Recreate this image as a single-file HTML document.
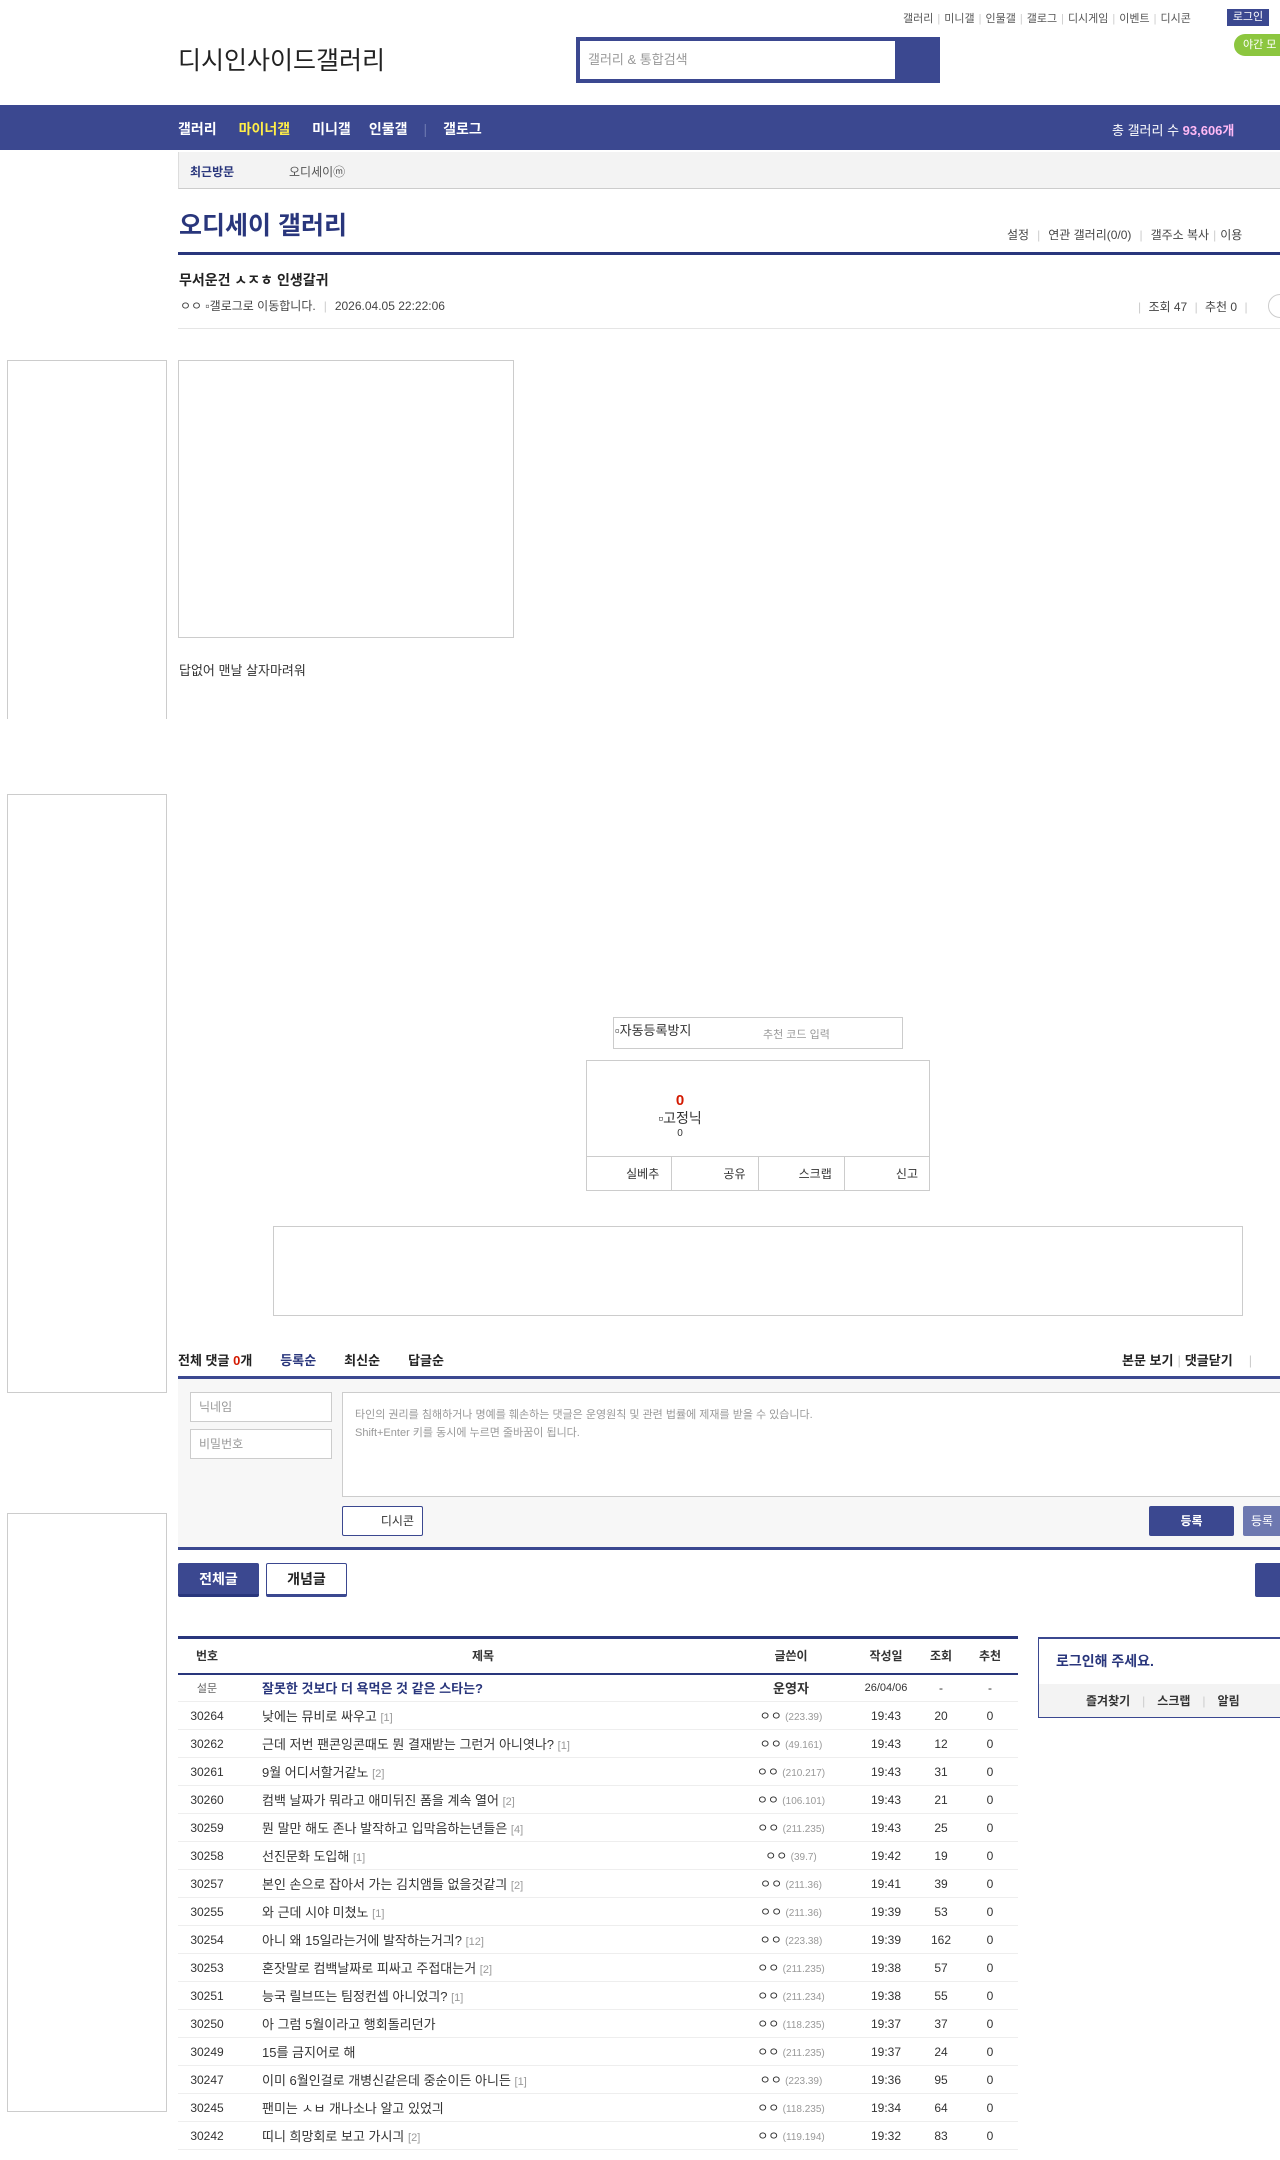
<!DOCTYPE html>
<html><head><meta charset="utf-8">
<style>
*{box-sizing:border-box;margin:0;padding:0}
html,body{width:1280px;height:2160px;overflow:hidden;background:#fff;font-family:"Liberation Sans","Noto Sans CJK KR",sans-serif;color:#333;font-size:13px}
.a{position:absolute;white-space:nowrap}
.sep{color:#ccc;margin:0 4px}
table{border-collapse:collapse}
.lt td{height:28px;border-bottom:1px solid #eee;font-size:12px;text-align:center;color:#333}
.lt td.t{text-align:left;padding-left:26px;font-size:13px}
.lt .r{color:#999;font-size:11px}
.lt .ip{color:#999;font-size:10px}
</style></head><body>
<div class="a" style="left:903px;top:10px;font-size:11px;color:#555">갤러리<span class="sep">|</span>미니갤<span class="sep">|</span>인물갤<span class="sep">|</span>갤로그<span class="sep">|</span>디시게임<span class="sep">|</span>이벤트<span class="sep">|</span>디시콘</div>
<div class="a" style="left:1227px;top:9px;width:42px;height:17px;background:#3b4890;color:#fff;font-size:11px;text-align:center;line-height:17px">로그인</div>
<div class="a" style="left:1234px;top:34px;width:60px;height:22px;background:#8cc63f;border-radius:11px;color:#fff;font-size:11px;line-height:22px;padding-left:9px">야간 모</div>
<div class="a" style="left:178px;top:41px;font-size:25px;color:#222">디시인사이드갤러리</div>
<div class="a" style="left:576px;top:37px;width:364px;height:46px;background:#3b4890"></div>
<div class="a" style="left:580px;top:41px;width:315px;height:38px;background:#fff;color:#999;font-size:13px;line-height:38px;padding-left:8px">갤러리 &amp; 통합검색</div>
<div class="a" style="left:0;top:105px;width:1280px;height:45px;background:#3b4890"></div>
<div class="a" style="left:178px;top:119px;font-size:14px;font-weight:bold;color:#fff">갤러리<span style="margin-left:22px;color:#ffed48">마이너갤</span><span style="margin-left:22px">미니갤</span><span style="margin-left:18px">인물갤</span><span style="margin-left:16px;color:#6c77b0;font-weight:normal">|</span><span style="margin-left:16px">갤로그</span></div>
<div class="a" style="left:1112px;top:120px;font-size:13px;color:#fff">총 갤러리 수 <b style="color:#ffb9f5">93,606개</b></div>
<div class="a" style="left:178px;top:152px;width:1102px;height:37px;background:#f3f3f3;border-bottom:1px solid #ccc;border-left:1px solid #ddd"></div>
<div class="a" style="left:190px;top:163px;font-size:12px;font-weight:bold;color:#29367c">최근방문</div>
<div class="a" style="left:289px;top:163px;font-size:12px;color:#555">오디세이ⓜ</div>
<div class="a" style="left:179px;top:206px;font-size:25px;color:#29367c;font-weight:bold">오디세이 갤러리</div>
<div class="a" style="left:1007px;top:226px;font-size:12px;color:#444">설정<span class="sep" style="margin:0 8px">|</span>연관 갤러리(0/0)<span class="sep" style="margin:0 8px">|</span>갤주소 복사<span class="sep">|</span>이용</div>
<div class="a" style="left:178px;top:252px;width:1102px;height:3px;background:#29367c"></div>
<div class="a" style="left:179px;top:270px;font-size:14px;font-weight:bold;color:#222">무서운건 ㅅㅈㅎ 인생갈귀</div>
<div class="a" style="left:180px;top:297px;font-size:12px;color:#444">ㅇㅇ ▫갤로그로 이동합니다.<span class="sep" style="margin:0 8px">|</span>2026.04.05 22:22:06</div>
<div class="a" style="left:1134px;top:298px;font-size:12px;color:#444"><span class="sep">|</span> 조회 47 <span class="sep">|</span> 추천 0 <span class="sep">|</span></div>
<div class="a" style="left:1268px;top:294px;width:24px;height:24px;border:1px solid #ccc;border-radius:50%"></div>
<div class="a" style="left:178px;top:328px;width:1102px;height:1px;background:#e5e5e5"></div>
<div class="a" style="left:7px;top:360px;width:160px;height:359px;border:1px solid #ccc;border-bottom:none"></div>
<div class="a" style="left:7px;top:794px;width:160px;height:599px;border:1px solid #ccc"></div>
<div class="a" style="left:7px;top:1513px;width:160px;height:599px;border:1px solid #ccc"></div>
<div class="a" style="left:178px;top:360px;width:336px;height:278px;border:1px solid #ccc"></div>
<div class="a" style="left:179px;top:660px;font-size:13px;color:#333">답없어 맨날 살자마려워</div>
<div class="a" style="left:613px;top:1017px;width:290px;height:32px;border:1px solid #ccc"></div>
<div class="a" style="left:615px;top:1020px;font-size:13px;color:#333">▫자동등록방지</div>
<div class="a" style="left:763px;top:1026px;font-size:11px;color:#999">추천 코드 입력</div>
<div class="a" style="left:586px;top:1060px;width:344px;height:131px;border:1px solid #ccc"></div>
<div class="a" style="left:586px;top:1092px;width:188px;text-align:center;font-size:15px;font-weight:bold;color:#d31900">0</div>
<div class="a" style="left:586px;top:1108px;width:188px;text-align:center;font-size:14px;color:#333">▫고정닉</div>
<div class="a" style="left:586px;top:1128px;width:188px;text-align:center;font-size:10px;color:#333">0</div>
<div class="a" style="left:586px;top:1156px;width:344px;height:35px;border-top:1px solid #ccc;display:flex;font-size:12px;color:#333">
<div style="flex:1;border-right:1px solid #ccc;text-align:right;padding-right:12px;line-height:34px">실베추</div>
<div style="flex:1;border-right:1px solid #ccc;text-align:right;padding-right:12px;line-height:34px">공유</div>
<div style="flex:1;border-right:1px solid #ccc;text-align:right;padding-right:12px;line-height:34px">스크랩</div>
<div style="flex:1;text-align:right;padding-right:12px;line-height:34px">신고</div></div>
<div class="a" style="left:273px;top:1226px;width:970px;height:90px;border:1px solid #ccc"></div>
<div class="a" style="left:178px;top:1350px;font-size:13px;font-weight:bold;color:#222">전체 댓글 <span style="color:#d31900">0</span>개<span style="margin-left:28px;color:#29367c">등록순</span><span style="margin-left:28px">최신순</span><span style="margin-left:28px">답글순</span></div>
<div class="a" style="left:1122px;top:1350px;font-size:13px;font-weight:bold;color:#222">본문 보기<span class="sep" style="font-weight:normal">|</span>댓글닫기<span class="sep" style="margin-left:16px;font-weight:normal">|</span></div>
<div class="a" style="left:178px;top:1376px;width:1102px;height:3px;background:#3b4890"></div>
<div class="a" style="left:178px;top:1379px;width:1102px;height:169px;background:#f7f7f7"></div>
<div class="a" style="left:190px;top:1392px;width:142px;height:30px;border:1px solid #ccc;background:#fff;font-size:12px;color:#999;line-height:28px;padding-left:8px">닉네임</div>
<div class="a" style="left:190px;top:1429px;width:142px;height:30px;border:1px solid #ccc;background:#fff;font-size:12px;color:#999;line-height:28px;padding-left:8px">비밀번호</div>
<div class="a" style="left:342px;top:1392px;width:950px;height:105px;border:1px solid #ccc;background:#fff;font-size:11px;color:#999;padding:13px 12px;line-height:18px;white-space:normal">타인의 권리를 침해하거나 명예를 훼손하는 댓글은 운영원칙 및 관련 법률에 제재를 받을 수 있습니다.<br>Shift+Enter 키를 동시에 누르면 줄바꿈이 됩니다.</div>
<div class="a" style="left:342px;top:1506px;width:81px;height:30px;border:1px solid #3b4890;border-radius:2px;background:#fff;font-size:12px;color:#333;line-height:28px;text-align:right;padding-right:8px">디시콘</div>
<div class="a" style="left:1149px;top:1506px;width:85px;height:30px;background:#3b4890;border-radius:2px;color:#fff;font-size:12px;font-weight:bold;text-align:center;line-height:30px">등록</div>
<div class="a" style="left:1243px;top:1506px;width:60px;height:30px;background:#6d78b0;border-radius:2px;color:#fff;font-size:12px;line-height:30px;padding-left:8px">등록</div>
<div class="a" style="left:178px;top:1547px;width:1102px;height:3px;background:#3b4890"></div>
<div class="a" style="left:178px;top:1563px;width:81px;height:34px;background:#3b4890;border-bottom:3px solid #29367c;border-radius:2px;color:#fff;font-size:14px;font-weight:bold;text-align:center;line-height:32px">전체글</div>
<div class="a" style="left:266px;top:1563px;width:81px;height:34px;background:#fff;border:1px solid #3b4890;border-bottom:3px solid #3b4890;border-radius:2px;color:#222;font-size:14px;font-weight:bold;text-align:center;line-height:30px">개념글</div>
<div class="a" style="left:1255px;top:1563px;width:40px;height:34px;background:#3b4890;border-radius:2px"></div>
<div class="a" style="left:178px;top:1636px;width:840px">
<table class="lt" style="width:840px;border-top:3px solid #29367c;table-layout:fixed">
<colgroup><col style="width:58px"><col style="width:494px"><col style="width:122px"><col style="width:68px"><col style="width:42px"><col style="width:56px"></colgroup>
<tr><td style="height:36px;font-weight:bold;border-bottom:2px solid #29367c">번호</td><td style="font-weight:bold;border-bottom:2px solid #29367c">제목</td><td style="font-weight:bold;border-bottom:2px solid #29367c">글쓴이</td><td style="font-weight:bold;border-bottom:2px solid #29367c">작성일</td><td style="font-weight:bold;border-bottom:2px solid #29367c">조회</td><td style="font-weight:bold;border-bottom:2px solid #29367c">추천</td></tr>
<tr><td style="font-size:11px;color:#666">설문</td><td class="t" style="font-weight:bold;color:#29367c">잘못한 것보다 더 욕먹은 것 같은 스타는?</td><td style="font-weight:bold;font-size:13px">운영자</td><td style="font-size:11px">26/04/06</td><td>-</td><td>-</td></tr>
<tr><td>30264</td><td class="t">낮에는 뮤비로 싸우고 <span class="r">[1]</span></td><td>ㅇㅇ <span class="ip">(223.39)</span></td><td>19:43</td><td>20</td><td>0</td></tr>
<tr><td>30262</td><td class="t">근데 저번 팬콘잉콘때도 뭔 결재받는 그런거 아니엿나? <span class="r">[1]</span></td><td>ㅇㅇ <span class="ip">(49.161)</span></td><td>19:43</td><td>12</td><td>0</td></tr>
<tr><td>30261</td><td class="t">9월 어디서할거같노 <span class="r">[2]</span></td><td>ㅇㅇ <span class="ip">(210.217)</span></td><td>19:43</td><td>31</td><td>0</td></tr>
<tr><td>30260</td><td class="t">컴백 날짜가 뭐라고 애미뒤진 폼을 계속 열어 <span class="r">[2]</span></td><td>ㅇㅇ <span class="ip">(106.101)</span></td><td>19:43</td><td>21</td><td>0</td></tr>
<tr><td>30259</td><td class="t">뭔 말만 해도 존나 발작하고 입막음하는년들은 <span class="r">[4]</span></td><td>ㅇㅇ <span class="ip">(211.235)</span></td><td>19:43</td><td>25</td><td>0</td></tr>
<tr><td>30258</td><td class="t">선진문화 도입해 <span class="r">[1]</span></td><td>ㅇㅇ <span class="ip">(39.7)</span></td><td>19:42</td><td>19</td><td>0</td></tr>
<tr><td>30257</td><td class="t">본인 손으로 잡아서 가는 김치앰들 없을것같긔 <span class="r">[2]</span></td><td>ㅇㅇ <span class="ip">(211.36)</span></td><td>19:41</td><td>39</td><td>0</td></tr>
<tr><td>30255</td><td class="t">와 근데 시야 미쳤노 <span class="r">[1]</span></td><td>ㅇㅇ <span class="ip">(211.36)</span></td><td>19:39</td><td>53</td><td>0</td></tr>
<tr><td>30254</td><td class="t">아니 왜 15일라는거에 발작하는거긔? <span class="r">[12]</span></td><td>ㅇㅇ <span class="ip">(223.38)</span></td><td>19:39</td><td>162</td><td>0</td></tr>
<tr><td>30253</td><td class="t">혼잣말로 컴백날짜로 피싸고 주접대는거 <span class="r">[2]</span></td><td>ㅇㅇ <span class="ip">(211.235)</span></td><td>19:38</td><td>57</td><td>0</td></tr>
<tr><td>30251</td><td class="t">능국 릴브뜨는 팀정컨셉 아니었긔? <span class="r">[1]</span></td><td>ㅇㅇ <span class="ip">(211.234)</span></td><td>19:38</td><td>55</td><td>0</td></tr>
<tr><td>30250</td><td class="t">아 그럼 5월이라고 행회돌리던가</td><td>ㅇㅇ <span class="ip">(118.235)</span></td><td>19:37</td><td>37</td><td>0</td></tr>
<tr><td>30249</td><td class="t">15를 금지어로 해</td><td>ㅇㅇ <span class="ip">(211.235)</span></td><td>19:37</td><td>24</td><td>0</td></tr>
<tr><td>30247</td><td class="t">이미 6월인걸로 개병신같은데 중순이든 아니든 <span class="r">[1]</span></td><td>ㅇㅇ <span class="ip">(223.39)</span></td><td>19:36</td><td>95</td><td>0</td></tr>
<tr><td>30245</td><td class="t">팬미는 ㅅㅂ 개나소나 알고 있었긔</td><td>ㅇㅇ <span class="ip">(118.235)</span></td><td>19:34</td><td>64</td><td>0</td></tr>
<tr><td>30242</td><td class="t">띠니 희망회로 보고 가시긔 <span class="r">[2]</span></td><td>ㅇㅇ <span class="ip">(119.194)</span></td><td>19:32</td><td>83</td><td>0</td></tr>
</table></div>
<div class="a" style="left:1038px;top:1637px;width:260px;height:81px;border:1px solid #3b4890;border-top:2px solid #3b4890"></div>
<div class="a" style="left:1039px;top:1684px;width:250px;height:33px;background:#f3f3f3"></div>
<div class="a" style="left:1056px;top:1651px;font-size:14px;font-weight:bold;color:#29367c">로그인해 주세요.</div>
<div class="a" style="left:1086px;top:1692px;font-size:12px;font-weight:bold;color:#333">즐겨찾기<span class="sep" style="margin:0 12px;font-weight:normal">|</span>스크랩<span class="sep" style="margin:0 12px;font-weight:normal">|</span>알림</div>
</body></html>
